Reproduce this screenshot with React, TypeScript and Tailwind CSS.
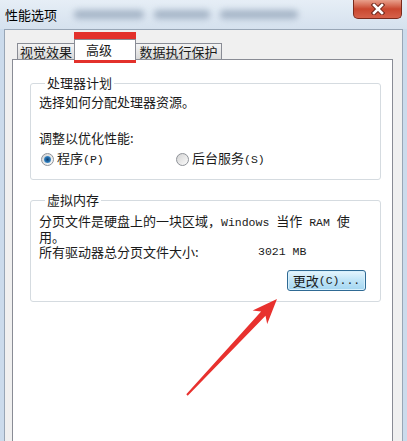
import React from 'react';

const cjk = "font-['Noto_Sans_CJK_SC',sans-serif]";
const mono = "font-['Liberation_Mono',monospace] text-[11.5px]";

function Radio({ checked }: { checked?: boolean }) {
  return (
    <span className="w-[13px] h-[13px] rounded-full border border-[#8e9298] bg-gradient-to-br from-[#d4d4d4] to-[#fbfbfb] flex items-center justify-center shrink-0">
      {checked && (
        <span className="w-[7px] h-[7px] rounded-full bg-[radial-gradient(circle,#0f3f6e_0%,#2b78b8_55%,#8ccbf0_100%)]" />
      )}
    </span>
  );
}

export default function App() {
  return (
    <div className={`relative w-[407px] h-[441px] overflow-hidden bg-[#cbdbec] text-[13px] leading-[14px] text-[#1a1a1a] ${cjk}`}>
      {/* Title bar */}
      <div className="h-[29px] flex items-center pl-[5px] bg-gradient-to-b from-[#e6eef6] to-[#d5e1ee]">
        <span className="text-black">性能选项</span>
        <div className="flex items-center ml-[17px] gap-[10px] opacity-60">
          <div className="w-[70px] h-[9px] rounded bg-[#8194ab] blur-[3px]" />
          <div className="w-[56px] h-[9px] rounded bg-[#8194ab] blur-[3px]" />
          <div className="w-[78px] h-[9px] rounded bg-[#8194ab] blur-[3px]" />
        </div>
        <div className="ml-auto mr-[5px] self-start w-[49px] h-[19px] rounded-b-[5px] border border-t-0 border-[#7a2a1c] bg-gradient-to-b from-[#e8a08c] via-[#c9472f] to-[#d6614a] flex items-center justify-center">
          <svg width="14" height="12" viewBox="0 0 14 12">
            <path d="M3 2 L11 10 M11 2 L3 10" stroke="#6b2418" strokeWidth="4.5" strokeLinecap="square" />
            <path d="M3 2 L11 10 M11 2 L3 10" stroke="#ffffff" strokeWidth="2.6" strokeLinecap="square" />
          </svg>
        </div>
      </div>

      {/* Window content */}
      <div className="mx-[4px] h-[412px] bg-[#f0f0f0] border-x border-t border-[#98a6b6]">
        {/* Tabs */}
        <div className="h-[29px] flex items-end pl-[12px]">
          <div className="w-[58px] h-[16px] flex items-center justify-center border border-b-0 border-[#898c95] bg-gradient-to-b from-[#f4f4f4] to-[#d9d9d9]">
            视觉效果
          </div>
          <div className="relative z-10 -ml-px -mb-px w-[62px] h-[21px] flex items-center pl-[11px] border border-b-0 border-[#898c95] bg-white">
            高级
          </div>
          <div className="w-[86px] h-[16px] flex items-center justify-center border border-b-0 border-l-0 border-[#898c95] bg-gradient-to-b from-[#f4f4f4] to-[#d9d9d9]">
            数据执行保护
          </div>
        </div>

        {/* Tab panel */}
        <div className="ml-[7px] w-[381px] h-[400px] border border-[#898c95] bg-white">
          <fieldset className="ml-[17px] mt-[16px] w-[351px] border border-[#d5dbe0] rounded-[3px] pl-[8px] pb-[13px]">
            <legend className="ml-[6px] px-[2px] leading-[14px]">处理器计划</legend>
            <p className="mt-[5px]">选择如何分配处理器资源。</p>
            <p className="mt-[22px]">调整以优化性能:</p>
            <div className="mt-[7px] h-[14px] flex items-center ml-[2px]">
              <label className="w-[135px] flex items-center gap-[3px]">
                <Radio checked />
                <span>
                  程序<span className={mono}>(P)</span>
                </span>
              </label>
              <label className="flex items-center gap-[3px]">
                <Radio />
                <span>
                  后台服务<span className={mono}>(S)</span>
                </span>
              </label>
            </div>
          </fieldset>

          <fieldset className="ml-[17px] mt-[13px] w-[351px] border border-[#d5dbe0] rounded-[3px] pl-[8px] pb-[10px]">
            <legend className="ml-[6px] px-[2px] leading-[14px]">虚拟内存</legend>
            <p className="mt-[7px]">
              分页文件是硬盘上的一块区域，<span className={mono}>Windows </span>当作<span className={mono}> RAM </span>使
              <br />
              用。
            </p>
            <div className="mt-[1px] flex">
              <span className="w-[219px]">所有驱动器总分页文件大小:</span>
              <span className={mono}>3021 MB</span>
            </div>
            <div className="mt-[11px] flex justify-end mr-[14px]">
              <button className="w-[79px] h-[21px] rounded-[3px] border border-[#2f6a94] bg-gradient-to-b from-[#e6f5fd] via-[#bfe4f7] to-[#a4d6f1] shadow-[inset_0_0_0_1px_#d8f0fc] flex items-center justify-center text-[#1a1a1a]">
                更改<span className={mono}>(C)...</span>
              </button>
            </div>
          </fieldset>
        </div>
      </div>

      {/* Annotation: red box and arrow */}
      <svg className="absolute inset-0 pointer-events-none" width="407" height="441" viewBox="0 0 407 441">
        <rect x="77.5" y="35.5" width="55" height="24" fill="none" stroke="#e3312b" strokeWidth="7" />
        <polygon
          points="277,299 267.2,324 265.5,315.7 187.7,395.7 186.3,394.3 261.1,311.5 252.6,310.4"
          fill="#e8312e"
        />
      </svg>
    </div>
  );
}
